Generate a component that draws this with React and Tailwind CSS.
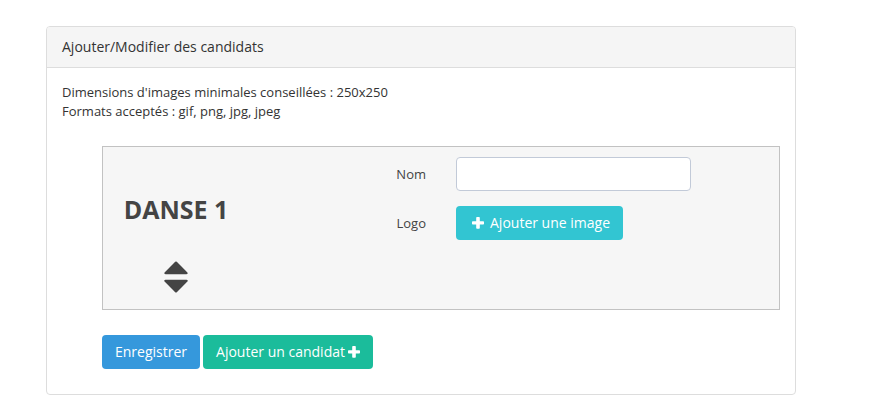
function PlusIcon({ className = "" }) {
  return (
    <svg viewBox="0 0 12 12" className={`size-3 ${className}`} fill="currentColor" aria-hidden="true">
      <path d="M5 0h2q.8 0 .8.8v3.4h3.4q.8 0 .8.8v1.7q0 .8-.8.8H7.800v3.400q0 .8-.8.8H5q-.8 0-.8-.8V7.500H.8Q0 7.500 0 6.700V5q0-.8.8-.8h3.400V.8Q4.200 0 5 0z" />
    </svg>
  );
}

function SortIcon() {
  return (
    <svg viewBox="0 0 24 32" className="h-8 w-6" fill="currentColor" aria-hidden="true">
      <path d="M11.200.8q.8-.8 1.600 0L23.400 11.400q1 1.600-.9 1.900H1.500q-1.900-.3-.9-1.900z" />
      <path d="M1.500 18.700h21q1.900.3.9 1.900L12.800 31.200q-.8.8-1.600 0L.6 20.600q-1-1.600.9-1.900z" />
    </svg>
  );
}

const button = "h-[34px] cursor-pointer items-center rounded text-sm text-white";

function Candidate({ name }) {
  return (
    <fieldset className="flex h-[164px] border border-[#c2c2c2] bg-[#f6f6f6]">
      <div className="flex w-[146px] shrink-0 flex-col items-center pt-[46px]">
        <h2 className="text-[25px] leading-8 font-bold text-[#444]">{name}</h2>
        <button type="button" aria-label="Déplacer" className="mt-9 cursor-pointer text-[#444]">
          <SortIcon />
        </button>
      </div>
      <div className="flex min-w-0 flex-1 flex-col gap-[15px] pt-[10px]">
        <div className="flex items-center gap-[30px]">
          <label htmlFor="nom" className="w-[177px] text-right text-[#444]">Nom</label>
          <input id="nom" type="text" className="h-[34px] w-[235px] rounded border border-[#c2cad8] bg-white px-3 text-sm" />
        </div>
        <div className="flex items-center gap-[30px]">
          <label htmlFor="logo" className="w-[177px] text-right text-[#444]">Logo</label>
          <button id="logo" type="button" className={`flex gap-[6px] bg-[#32c5d2] pr-[13px] pl-4 ${button}`}>
            <PlusIcon />
            Ajouter une image
          </button>
        </div>
      </div>
    </fieldset>
  );
}

export default function App() {
  return (
    <main className="pt-[26px] pr-[83px] pl-[46px] font-['Open_Sans',sans-serif] text-[13px] leading-[19px] text-[#333]">
      <section className="overflow-hidden rounded border border-[#ddd] bg-white">
        <header className="border-b border-[#ddd] bg-[#f5f5f5] px-[15px] py-[10px]">
          <h1 className="text-sm leading-5">Ajouter/Modifier des candidats</h1>
        </header>
        <form className="px-[15px] pt-[15px] pb-[25px]" onSubmit={(e) => e.preventDefault()}>
          <p>Dimensions d'images minimales conseillées : 250x250</p>
          <p>Formats acceptés : gif, png, jpg, jpeg</p>
          <div className="mt-[25px] ml-10">
            <Candidate name="DANSE 1" />
            <div className="mt-[25px] flex gap-[3px]">
              <button type="submit" className={`bg-[#3598dc] px-[13px] ${button}`}>Enregistrer</button>
              <button type="button" className={`flex gap-[3px] bg-[#1bbc9b] px-[13px] ${button}`}>
                Ajouter un candidat
                <PlusIcon />
              </button>
            </div>
          </div>
        </form>
      </section>
    </main>
  );
}
